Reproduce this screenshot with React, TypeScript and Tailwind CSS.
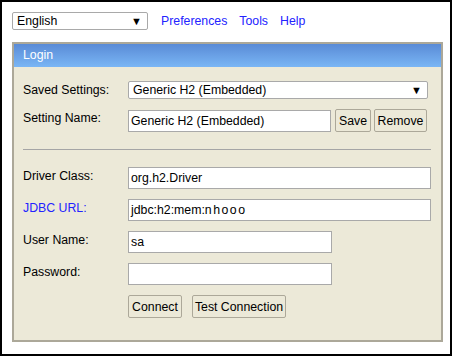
import React from "react";

const font = { fontFamily: '"Liberation Sans", Arial, sans-serif' };

function Arrow() {
  return <span className="text-[11px] leading-none text-black">▼</span>;
}

export default function App() {
  return (
    <div
      className="w-[452px] h-[356px] bg-white border-2 border-black text-[12.3px] text-black"
      style={font}
    >
      <div className="flex items-start pl-[10px] pt-[10px] h-[40px]">
        <div className="w-[136px] h-[18px] border border-[#a9a9a9] rounded-[2px] bg-white flex items-center justify-between pl-[4px] pr-[5px] leading-[16px]">
          <span>English</span>
          <Arrow />
        </div>
        <div className="flex gap-[12px] ml-[13px] text-[#2323ff] leading-[18px]">
          <span>Preferences</span>
          <span>Tools</span>
          <span>Help</span>
        </div>
      </div>
      <div className="ml-[10px] w-[431px] h-[300px] border-2 border-[#aca899] bg-[#ece9d8]">
        <div className="h-[23px] bg-gradient-to-b from-[#5a8bd6] to-[#7ab6f5] text-white pl-[9px] leading-[23px]">
          Login
        </div>
        <div className="pl-[9px] pt-[14px]">
          <div className="flex items-start h-[28px]">
            <div className="w-[105px] leading-[16px] pt-[1px]">Saved Settings:</div>
            <div className="w-[300px] h-[18px] border border-[#a9a9a9] rounded-[2px] bg-white flex items-center justify-between pl-[4px] pr-[5px] leading-[16px]">
              <span>Generic H2 (Embedded)</span>
              <Arrow />
            </div>
          </div>
          <div className="flex items-start h-[40px]">
            <div className="w-[105px] leading-[16px] pt-[1px]">Setting Name:</div>
            <div className="w-[203px] h-[22px] mt-[1px] border border-[#a9a9a9] bg-white pl-[2px] leading-[20px]">
              Generic H2 (Embedded)
            </div>
            <div className="ml-[4px] w-[36px] h-[23px] border border-[#aca899] rounded-[2px] flex items-center justify-center leading-[16px]">
              Save
            </div>
            <div className="ml-[3px] w-[53px] h-[23px] border border-[#aca899] rounded-[2px] flex items-center justify-center leading-[16px]">
              Remove
            </div>
          </div>
          <div className="w-[408px] h-px bg-[#a5a5a5]"></div>
          <div className="h-[17px]"></div>
          {[
            { label: "Driver Class:", value: "org.h2.Driver", w: "w-[303px]", blue: false },
            { label: "JDBC URL:", value: "jdbc:h2:mem:", extra: "nhooo", w: "w-[303px]", blue: true },
            { label: "User Name:", value: "sa", w: "w-[204px]", blue: false },
            { label: "Password:", value: "", w: "w-[204px]", blue: false },
          ].map((r) => (
            <div key={r.label} className="flex items-start h-[32px]">
              <div className={"w-[105px] leading-[16px] pt-[1px] " + (r.blue ? "text-[#2323ff]" : "")}>
                {r.label}
              </div>
              <div className={r.w + " h-[22px] border border-[#a9a9a9] bg-white pl-[2px] leading-[20px]"}>
                {r.value}
                {r.extra ? <span className="tracking-[1.5px]">{r.extra}</span> : null}
              </div>
            </div>
          ))}
          <div className="flex items-start pl-[105px] gap-[10px]">
            <div className="w-[54px] h-[23px] border border-[#aca899] rounded-[2px] flex items-center justify-center leading-[16px] whitespace-nowrap">
              Connect
            </div>
            <div className="w-[94px] h-[23px] border border-[#aca899] rounded-[2px] flex items-center justify-center leading-[16px] whitespace-nowrap">
              Test Connection
            </div>
          </div>
        </div>
      </div>
    </div>
  );
}
